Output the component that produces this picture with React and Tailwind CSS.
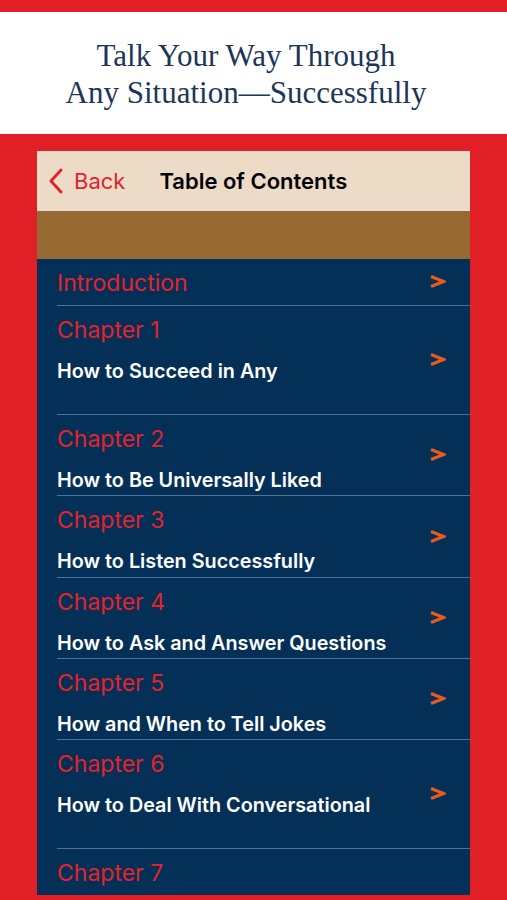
import React from 'react';

const chapters = [
  { title: 'Introduction', h: 'h-[47px]' },
  { title: 'Chapter 1', sub: 'How to Succeed in Any', h: 'h-[109px]' },
  { title: 'Chapter 2', sub: 'How to Be Universally Liked', h: 'h-[81px]' },
  { title: 'Chapter 3', sub: 'How to Listen Successfully', h: 'h-[82px]' },
  { title: 'Chapter 4', sub: 'How to Ask and Answer Questions', h: 'h-[81px]' },
  { title: 'Chapter 5', sub: 'How and When to Tell Jokes', h: 'h-[81px]' },
  { title: 'Chapter 6', sub: 'How to Deal With Conversational', h: 'h-[109px]' },
  { title: 'Chapter 7', h: 'h-[109px]' },
];

const Arrow = () => (
  <svg width="17" height="15" viewBox="0 0 17 15" className="shrink-0">
    <path d="M2 2.5 L14.5 7.5 L2 12.5" fill="none" stroke="#ea5a1f" strokeWidth="3.2" strokeLinejoin="miter" />
  </svg>
);

const Row = ({ item }) => (
  <div className={`${item.h} relative flex shrink-0 pl-[20px] pr-[24px]`}>
    <div className="flex-1 pt-[10px]">
      <div className="text-[23px] leading-[28px] text-[#e3232b]">{item.title}</div>
      {item.sub && (
        <div className="mt-[15px] text-[19.8px] font-semibold leading-[24px] text-white">{item.sub}</div>
      )}
    </div>
    {item.sub || item.title === 'Introduction' ? (
      <div className="flex items-center pb-[2px]">
        <Arrow />
      </div>
    ) : null}
    <div className="absolute bottom-0 left-[20px] right-0 h-[1.5px] bg-[#4f7196]" />
  </div>
);

export default function App() {
  return (
    <div className="flex h-[900px] w-[507px] flex-col overflow-hidden bg-[#e02026] font-['Inter',sans-serif]">
      <div className="mt-[12px] flex h-[122px] shrink-0 flex-col items-center justify-center bg-white pr-[15px] pt-[2px] font-['Liberation_Serif',serif] text-[31px] leading-[37px] text-[#1d3559]">
        <div>Talk Your Way Through</div>
        <div>Any Situation—Successfully</div>
      </div>
      <div className="mx-[37px] mt-[17px] flex h-[744px] flex-col overflow-hidden bg-[#042f57]">
        <div className="flex h-[60px] shrink-0 items-center bg-[#ecdcc7] pl-[11px]">
          <svg width="16" height="26" viewBox="0 0 16 26" className="mr-[10px]">
            <path d="M13 2 L3 13 L13 24" fill="none" stroke="#e3232b" strokeWidth="3" strokeLinecap="round" strokeLinejoin="round" />
          </svg>
          <span className="text-[22px] text-[#e3232b]">Back</span>
          <span className="ml-[34px] text-[22px] font-semibold text-black">Table of Contents</span>
        </div>
        <div className="h-[48px] shrink-0 bg-[#966a32]" />
        <div className="flex flex-col">
          {chapters.map((c) => (
            <Row key={c.title} item={c} />
          ))}
        </div>
      </div>
    </div>
  );
}
